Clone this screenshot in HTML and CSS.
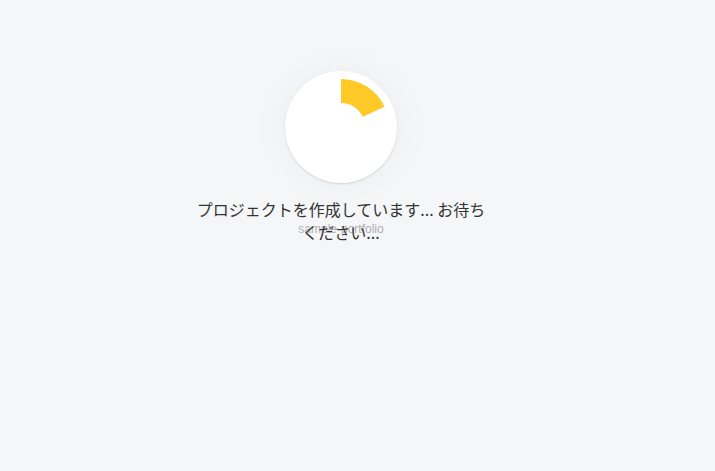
FILE: index.html
```html
<!DOCTYPE html>
<html lang="ja">
<head>
<meta charset="utf-8">
<link rel="stylesheet" href="styles.css">
</head>
<body>
<div class="stage">
  <div class="loader">
    <svg class="spinner" width="112" height="112" viewBox="-56 -56 112 112">
      <path d="M0 -48 A48 48 0 0 1 43.5 -20.3 L21.75 -10.14 A24 24 0 0 0 0 -24 Z" fill="#ffc928"/>
    </svg>
  </div>
  <div class="message">
    <p class="title">プロジェクトを作成しています... お待ちください...</p>
    <span class="sub">sample-portfolio</span>
  </div>
</div>
</body>
</html>
```
FILE: styles.css
```css
html, body {
  margin: 0;
  height: 100%;
  background: #f5f6f8;
}
body {
  font-family: "Noto Sans CJK JP", "Noto Sans", sans-serif;
}
.stage {
  display: flex;
  flex-direction: column;
  align-items: center;
  padding-top: 71px;
  padding-right: 33px;
}
.loader {
  width: 112px;
  height: 112px;
  border-radius: 50%;
  background: #fff;
  box-shadow: 0 0 40px rgba(0, 0, 0, 0.045), 0 1px 2px rgba(0, 0, 0, 0.12);
}
.spinner {
  display: block;
}
.message {
  position: relative;
  margin-top: 15px;
  width: 300px;
  text-align: center;
}
.title {
  position: relative;
  z-index: 1;
  margin: 0;
  font-size: 16px;
  line-height: 23px;
  color: #333;
}
.sub {
  position: absolute;
  left: 0;
  right: 0;
  top: 24px;
  font-family: "Liberation Sans", Arial, sans-serif;
  font-size: 12px;
  color: #b0b0b0;
}
```
